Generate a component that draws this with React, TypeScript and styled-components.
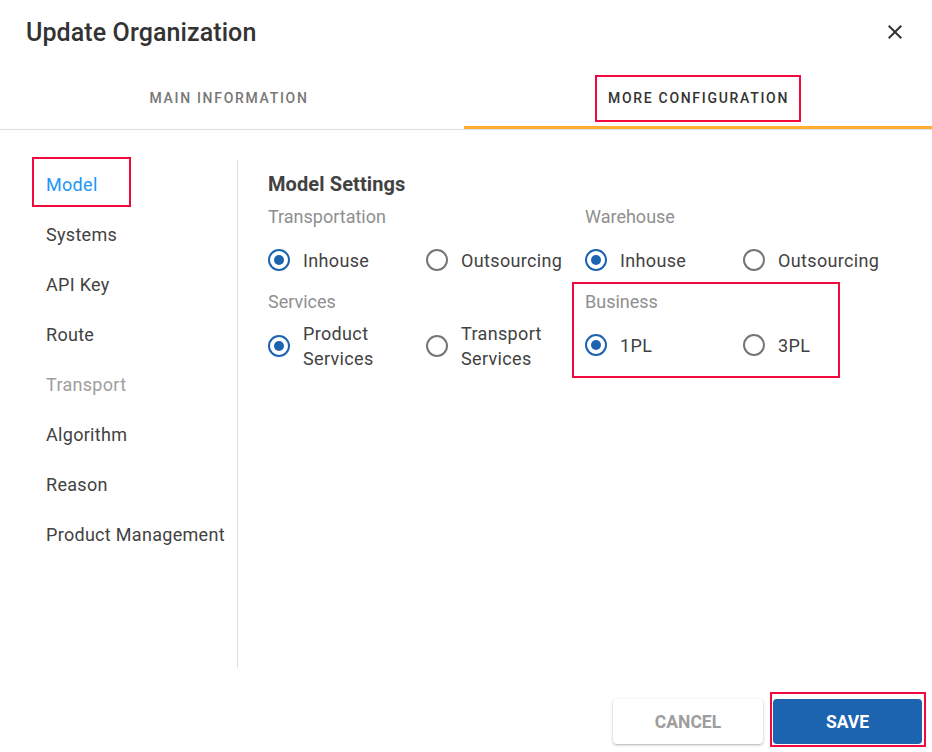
import React from "react";
import styled, { createGlobalStyle, css } from "styled-components";

const RED = "#f20a3f";
const BLUE = "#1c63b0";

const Global = createGlobalStyle`
  html, body { margin: 0; padding: 0; background: #fff; }
  body { font-family: Roboto, "Noto Sans", "Liberation Sans", sans-serif; color: #333; }
  * { box-sizing: border-box; }
`;

const Dialog = styled.div`
  width: 932px;
  height: 752px;
  display: flex;
  flex-direction: column;
  background: #fff;
`;

const Header = styled.header`
  height: 64px;
  padding: 0 25px 0 26px;
  display: flex;
  align-items: center;
  justify-content: space-between;
`;

const Title = styled.h1`
  margin: 0;
  font-size: 25px;
  font-weight: 500;
  color: #333;
  letter-spacing: 0.1px;
`;

const CloseButton = styled.button`
  border: none;
  background: none;
  padding: 0;
  width: 24px;
  height: 24px;
  display: flex;
  align-items: center;
  justify-content: center;
  color: #333;
  cursor: pointer;
`;

const Tabs = styled.div`
  height: 66px;
  display: grid;
  grid-template-columns: 458px 1fr;
  column-gap: 6px;
  border-bottom: 1px solid #e0e0e0;
`;

const Tab = styled.div<{ $active?: boolean }>`
  display: flex;
  align-items: center;
  justify-content: center;
  padding-top: 7px;
  border-bottom: 3px solid ${(p) => (p.$active ? "#ffad33" : "transparent")};
  font-size: 14px;
  font-weight: 500;
  letter-spacing: 1.7px;
  text-transform: uppercase;
  color: ${(p) => (p.$active ? "#333" : "#777")};
`;

const TabLabel = styled.span<{ $marked?: boolean }>`
  line-height: 19px;
  ${(p) =>
    p.$marked &&
    css`
      border: 2px solid ${RED};
      padding: 12px 10px 12px 11px;
    `}
`;

const Body = styled.div`
  flex: 1;
  display: flex;
  padding: 30px 0 12px;
`;

const Nav = styled.nav`
  width: 238px;
  border-right: 1px solid #e0e0e0;
  display: flex;
  flex-direction: column;
  align-items: flex-start;
`;

const NavItem = styled.div<{ $active?: boolean; $disabled?: boolean; $marked?: boolean }>`
  height: 50px;
  display: flex;
  align-items: center;
  padding: 0 0 2px 46px;
  font-size: 18px;
  letter-spacing: 0.3px;
  color: ${(p) => (p.$active ? "#2196f3" : p.$disabled ? "#9e9e9e" : "#424242")};
  ${(p) =>
    p.$marked &&
    css`
      margin: -3px 0 3px 32px;
      width: 99px;
      padding: 4px 0 0 12px;
      border: 2px solid ${RED};
    `}
`;

const Content = styled.section`
  flex: 1;
  padding: 12px 0 0 30px;
`;

const SectionTitle = styled.h2`
  margin: 0 0 9px;
  font-size: 20px;
  line-height: 24px;
  font-weight: 700;
  letter-spacing: 0.1px;
  color: #424242;
`;

const Grid = styled.div`
  display: grid;
  grid-template-columns: 317px 317px;
  row-gap: 6px;
`;

const Group = styled.div<{ $marked?: boolean }>`
  ${(p) =>
    p.$marked &&
    css`
      justify-self: start;
      border: 2px solid ${RED};
      margin: -8px 0 -7px -13px;
      padding: 6px 28px 5px 11px;
    `}
`;

const GroupLabel = styled.div`
  font-size: 18px;
  line-height: 24px;
  color: #8f8f8f;
`;

const Options = styled.div`
  margin-top: 7px;
  display: grid;
  grid-template-columns: 158px auto;
  min-height: 48px;
  align-items: center;
`;

const Option = styled.label`
  display: flex;
  align-items: center;
  gap: 13px;
  font-size: 18px;
  letter-spacing: 0.35px;
  line-height: 25px;
  color: #424242;
  cursor: pointer;
`;

const RadioCircle = styled.span<{ $checked?: boolean }>`
  flex: none;
  width: 22px;
  height: 22px;
  border-radius: 50%;
  border: 2px solid ${(p) => (p.$checked ? BLUE : "#757575")};
  display: flex;
  align-items: center;
  justify-content: center;
  &::after {
    content: "";
    width: 10px;
    height: 10px;
    border-radius: 50%;
    background: ${(p) => (p.$checked ? BLUE : "transparent")};
  }
`;

const Footer = styled.footer`
  height: 72px;
  display: flex;
  justify-content: flex-end;
  align-items: flex-start;
  gap: 10px;
  padding: 19px 10px 0 0;
`;

const Button = styled.button<{ $primary?: boolean }>`
  width: 150px;
  height: 45px;
  border: none;
  border-radius: 4px;
  font-family: inherit;
  font-size: 17.5px;
  font-weight: 700;
  text-transform: uppercase;
  cursor: pointer;
  ${(p) =>
    p.$primary
      ? css`
          width: 149px;
          background: ${BLUE};
          color: #fff;
        `
      : css`
          background: #fff;
          color: #9e9e9e;
          box-shadow: 0 1px 3px rgba(0, 0, 0, 0.25), 0 1px 1px rgba(0, 0, 0, 0.08);
        `}
`;

const Marker = styled.span`
  display: flex;
  border: 2px solid ${RED};
  padding: 5px 2px 1px 1px;
  margin: -7px -4px -3px -3px;
`;

type Opt = { label: React.ReactNode; checked?: boolean };
type G = { title: string; options: Opt[]; marked?: boolean };

const groups: G[] = [
  { title: "Transportation", options: [{ label: "Inhouse", checked: true }, { label: "Outsourcing" }] },
  { title: "Warehouse", options: [{ label: "Inhouse", checked: true }, { label: "Outsourcing" }] },
  {
    title: "Services",
    options: [
      { label: <>Product<br />Services</>, checked: true },
      { label: <>Transport<br />Services</> },
    ],
  },
  { title: "Business", marked: true, options: [{ label: "1PL", checked: true }, { label: "3PL" }] },
];

const navItems = [
  { label: "Model", active: true },
  { label: "Systems" },
  { label: "API Key" },
  { label: "Route" },
  { label: "Transport", disabled: true },
  { label: "Algorithm" },
  { label: "Reason" },
  { label: "Product Management" },
];

export default function App() {
  return (
    <>
      <Global />
      <Dialog>
        <Header>
          <Title>Update Organization</Title>
          <CloseButton aria-label="close">
            <svg width="24" height="24" viewBox="0 0 24 24" fill="currentColor">
              <path d="M19 6.41L17.59 5 12 10.59 6.41 5 5 6.41 10.59 12 5 17.59 6.41 19 12 13.41 17.59 19 19 17.59 13.41 12z" />
            </svg>
          </CloseButton>
        </Header>
        <Tabs>
          <Tab>
            <TabLabel>Main Information</TabLabel>
          </Tab>
          <Tab $active>
            <TabLabel $marked>More Configuration</TabLabel>
          </Tab>
        </Tabs>
        <Body>
          <Nav>
            {navItems.map((n) => (
              <NavItem key={n.label} $active={n.active} $marked={n.active} $disabled={n.disabled}>
                {n.label}
              </NavItem>
            ))}
          </Nav>
          <Content>
            <SectionTitle>Model Settings</SectionTitle>
            <Grid>
              {groups.map((g) => (
                <Group key={g.title} $marked={g.marked}>
                  <GroupLabel>{g.title}</GroupLabel>
                  <Options>
                    {g.options.map((o, i) => (
                      <Option key={i}>
                        <RadioCircle $checked={o.checked} />
                        <span>{o.label}</span>
                      </Option>
                    ))}
                  </Options>
                </Group>
              ))}
            </Grid>
          </Content>
        </Body>
        <Footer>
          <Button>Cancel</Button>
          <Marker>
            <Button $primary>Save</Button>
          </Marker>
        </Footer>
      </Dialog>
    </>
  );
}
